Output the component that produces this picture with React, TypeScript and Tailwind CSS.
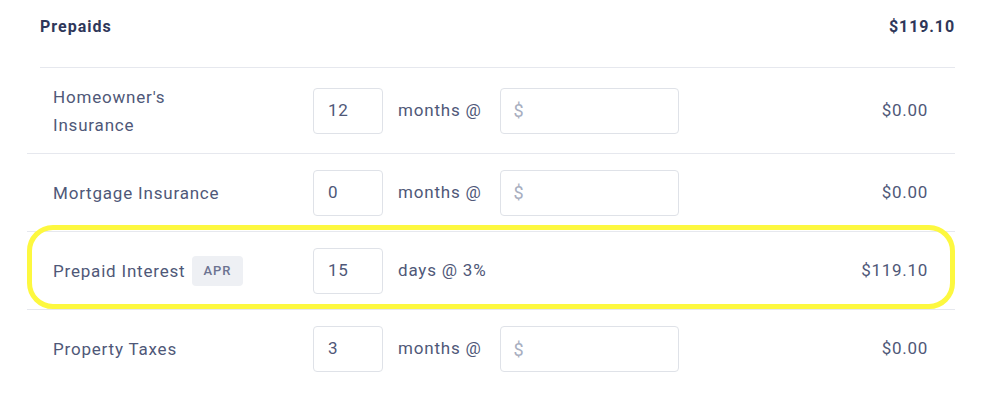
import React from 'react';

type Row = {
  label: string;
  badge?: string;
  qty: string;
  unit: string;
  priced: boolean;
  amount: string;
  highlight?: boolean;
};

const rows: Row[] = [
  { label: "Homeowner's Insurance", qty: '12', unit: 'months @', priced: true, amount: '$0.00' },
  { label: 'Mortgage Insurance', qty: '0', unit: 'months @', priced: true, amount: '$0.00' },
  { label: 'Prepaid Interest', badge: 'APR', qty: '15', unit: 'days @ 3%', priced: false, amount: '$119.10', highlight: true },
  { label: 'Property Taxes', qty: '3', unit: 'months @', priced: true, amount: '$0.00' },
];

function PrepaidRow({ row, last }: { row: Row; last: boolean }) {
  return (
    <div
      className={`relative flex items-center pl-[26px] pr-[27px] ${row.label.startsWith('Homeowner') ? 'h-[86px]' : 'h-[78px]'} ${
        last ? '' : 'border-b border-[#e6e8ee]'
      }`}
    >
      {/* Label */}
      <div className="w-[260px] flex items-center gap-[7px]">
        <span className="max-w-[180px] text-[17px] leading-[28px] tracking-[0.8px] text-[#4f5878]">{row.label}</span>
        {row.badge && (
          <span className="h-[30px] px-[11px] flex items-center rounded-[4px] bg-[#eef0f4] text-[13px] font-medium tracking-[1px] text-[#6c7391]">
            {row.badge}
          </span>
        )}
      </div>

      {/* Qty */}
      <div className="w-[70px] h-[46px] flex items-center pl-[14px] rounded-[4px] border border-[#dfe2e8] bg-white text-[17px] tracking-[0.8px] text-[#4f5878]">
        {row.qty}
      </div>
      <span className="ml-[15px] text-[17px] tracking-[0.8px] text-[#4f5878]">{row.unit}</span>

      {row.priced && (
        <div className="ml-[18px] w-[179px] h-[46px] flex items-center pl-[13px] rounded-[4px] border border-[#dfe2e8] bg-white text-[18px] text-[#a8aec0]">
          $
        </div>
      )}

      <span className="ml-auto text-[17px] text-[#4f5878] tracking-[0.7px]">{row.amount}</span>

      {row.highlight && (
        <div className="pointer-events-none absolute left-0 right-0 top-[-7px] bottom-0 rounded-[26px] border-[5px] border-[#fdf83f]" />
      )}
    </div>
  );
}

export default function App() {
  return (
    <div className="w-[996px] h-[418px] bg-white overflow-hidden" style={{ fontFamily: 'Roboto, "Noto Sans", sans-serif' }}>
      {/* Header */}
      <div className="ml-[40px] w-[915px] h-[68px] pt-[17px] flex justify-between border-b border-[#e6e8ee]">
        <span className="text-[16px] leading-[20px] font-bold tracking-[1px] text-[#2f375a]">Prepaids</span>
        <span className="text-[16px] leading-[20px] font-bold tracking-[0.9px] text-[#2f375a]">$119.10</span>
      </div>

      {/* Rows */}
      <div className="ml-[27px] w-[928px]">
        {rows.map((row, i) => (
          <PrepaidRow key={row.label} row={row} last={i === rows.length - 1} />
        ))}
      </div>
    </div>
  );
}
